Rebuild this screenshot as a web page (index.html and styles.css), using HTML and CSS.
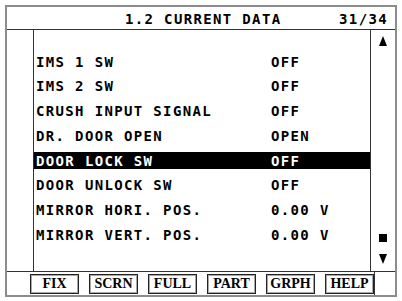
FILE: index.html
```html
<!DOCTYPE html>
<html lang="en">
<head>
    <meta charset="UTF-8">
    <meta name="viewport" content="width=device-width, initial-scale=1.0">
    <title>1.2 Current Data</title>
    <link rel="stylesheet" href="styles.css">
</head>
<body>
    <div class="screen">
        <div class="header">
            <span class="title">1.2 CURRENT DATA</span>
            <span class="page">31/34</span>
        </div>
        <div class="main">
            <div class="gutter"></div>
            <ul class="data-list">
                <li class="row"><span class="label">IMS 1 SW</span><span class="value">OFF</span></li>
                <li class="row"><span class="label">IMS 2 SW</span><span class="value">OFF</span></li>
                <li class="row"><span class="label">CRUSH INPUT SIGNAL</span><span class="value">OFF</span></li>
                <li class="row"><span class="label">DR. DOOR OPEN</span><span class="value">OPEN</span></li>
                <li class="row selected"><span class="label">DOOR LOCK SW</span><span class="value">OFF</span></li>
                <li class="row"><span class="label">DOOR UNLOCK SW</span><span class="value">OFF</span></li>
                <li class="row"><span class="label">MIRROR HORI. POS.</span><span class="value">0.00 V</span></li>
                <li class="row"><span class="label">MIRROR VERT. POS.</span><span class="value">0.00 V</span></li>
            </ul>
            <div class="scrollbar">
                <svg class="arrow-up" width="8" height="10" viewBox="0 0 8 10"><polygon points="4,0 8,10 0,10" fill="#000"/></svg>
                <div class="thumb"></div>
                <svg class="arrow-down" width="8" height="10" viewBox="0 0 8 10"><polygon points="0,0 8,0 4,10" fill="#000"/></svg>
            </div>
        </div>
        <div class="footer">
            <button class="key">FIX</button>
            <button class="key">SCRN</button>
            <button class="key">FULL</button>
            <button class="key">PART</button>
            <button class="key">GRPH</button>
            <button class="key">HELP</button>
            <div class="corner"></div>
        </div>
    </div>
</body>
</html>
```

FILE: styles.css
```css
body {
    margin: 0;
    padding: 0;
    background-color: #ffffff;
    font-family: "DejaVu Sans Mono", monospace;
    font-weight: bold;
    color: #000000;
}
.screen {
    box-sizing: border-box;
    width: 392px;
    height: 292px;
    margin: 5px 0 0 5px;
    border: 2px solid #8c8c8c;
    display: flex;
    flex-direction: column;
}
.header {
    height: 21px;
    border-bottom: 1px solid #333333;
    display: flex;
    align-items: center;
    justify-content: space-between;
    padding: 1px 7px 0 118px;
    font-size: 14px;
    letter-spacing: 1.35px;
}
.main {
    height: 241px;
    display: flex;
    border-bottom: 1px solid #333333;
}
.gutter {
    width: 26px;
    border-right: 1px solid #333333;
}
.data-list {
    flex: 1;
    list-style-type: none;
    margin: 0;
    padding: 23px 0 0 0;
    font-size: 14px;
    letter-spacing: 1.35px;
}
.row {
    display: flex;
    align-items: center;
    height: 17px;
    margin-bottom: 7.75px;
    padding-left: 2px;
}
.row.selected {
    background-color: #000000;
    color: #ffffff;
}
.label {
    width: 235px;
}
.scrollbar {
    width: 24px;
    border-left: 1px solid #333333;
    display: flex;
    flex-direction: column;
    align-items: center;
    padding: 6px 0 7px 0;
}
.arrow-up {
    display: block;
}
.thumb {
    width: 8px;
    height: 8px;
    background-color: #000000;
    margin-top: auto;
    margin-bottom: 12px;
}
.arrow-down {
    display: block;
}
.footer {
    flex: 1;
    display: flex;
    align-items: center;
    gap: 10px;
    padding-left: 23px;
}
.key {
    box-sizing: border-box;
    width: 49px;
    height: 20px;
    padding: 0;
    margin: 0;
    border: 1px solid #222222;
    box-shadow: inset 1px 1px 0 #a8a8a8, inset -1px -1px 0 #a8a8a8;
    background-color: #ffffff;
    font-family: "Liberation Serif", serif;
    font-weight: bold;
    font-size: 14px;
    color: #000000;
}
.corner {
    align-self: stretch;
    flex: 1;
    margin-left: -10px;
    border-left: 1px solid #333333;
}
```
